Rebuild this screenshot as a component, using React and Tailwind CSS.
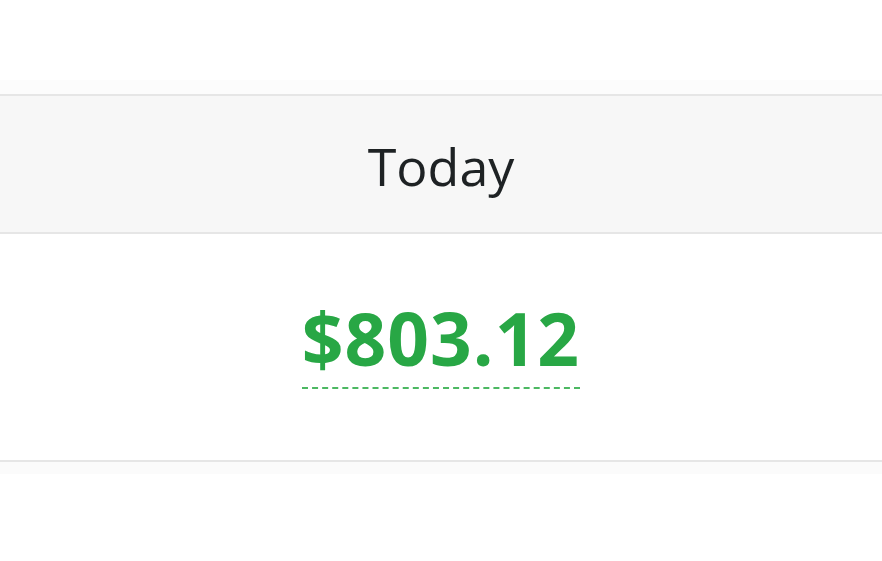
export default function App() {
  return (
    <div
      className="min-h-screen bg-white"
      style={{ fontFamily: '"Open Sans", "Noto Sans", sans-serif' }}
    >
      <div className="h-[80px]" />
      <div className="h-[14px] bg-[#fcfcfc]" />
      <div className="border-y-2 border-[#e6e6e6]">
        {/* Header */}
        <div className="h-[138px] bg-[#f7f7f7] flex items-center justify-center border-b-2 border-[#e6e6e6]">
          <h2 className="text-[52px] leading-none text-[#1e2224] font-normal pt-[4px]">
            Today
          </h2>
        </div>

        {/* Amount */}
        <div className="h-[226px] flex justify-center pt-[67px]">
          <div className="h-fit">
            <span className="block text-[73px] leading-none font-bold tracking-[1px] text-[#28a745] pb-[13px] border-b-2 border-dashed border-[#4cb862]">
              $803.12
            </span>
          </div>
        </div>
      </div>
      <div className="h-[12px] bg-[#fbfbfb]" />
    </div>
  );
}
